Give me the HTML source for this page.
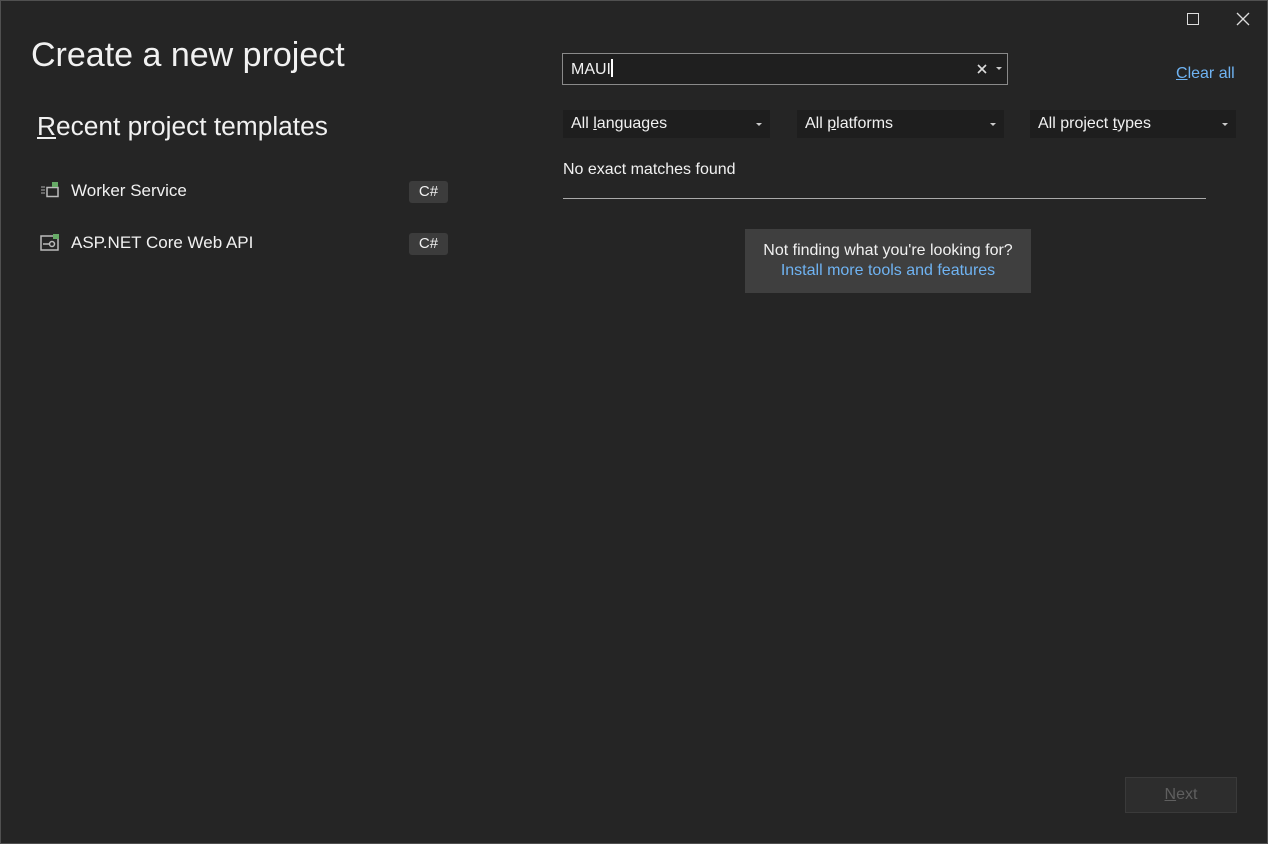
<!DOCTYPE html>
<html><head><meta charset="utf-8"><style>
*{margin:0;padding:0;box-sizing:border-box}
html,body{width:1268px;height:844px;overflow:hidden;background:#252525}
body{font-family:"Liberation Sans",sans-serif;color:#f1f1f1;position:relative}
.bd{position:absolute;left:0;top:0;width:1268px;height:844px;border:1px solid #505050}
.a{position:absolute;white-space:nowrap}
.dd{position:absolute;top:110px;height:28px;background:#1e1e1e;font-size:16px;padding:5px 8px;color:#f1f1f1}
.dd:after{content:"";position:absolute;right:8px;top:13px;border-left:3px solid transparent;border-right:3px solid transparent;border-top:3px solid #ccc}
.cs{position:absolute;left:409px;width:39px;height:22px;background:#3c3c3c;border-radius:3px;font-size:15px;text-align:center;line-height:22px}
u{text-decoration:underline}
</style></head><body>
<div class="bd"></div>
<div class="a" style="left:1187px;top:13px;width:12px;height:12px;border:1.5px solid #ddd"></div>
<svg class="a" style="left:1236px;top:12px" width="14" height="14"><path d="M1 1L13 13M13 1L1 13" stroke="#ddd" stroke-width="1.3"/></svg>
<div class="a" style="left:31px;top:36px;font-size:34px">Create a new project</div>
<div class="a" style="left:37px;top:111px;font-size:26.3px"><u>R</u>ecent project templates</div>
<svg class="a" style="left:40px;top:181px" width="20" height="18"><path d="M1 6h4M1 9h4M1 12h4" stroke="#aaa"/><rect x="7" y="6.5" width="11" height="9" fill="none" stroke="#bbb" stroke-width="1.5"/><rect x="12" y="1" width="6" height="5" fill="#6a6"/></svg>
<div class="a" style="left:71px;top:181px;font-size:17px">Worker Service</div>
<div class="cs" style="top:181px">C#</div>
<svg class="a" style="left:40px;top:233px" width="20" height="18"><rect x="1" y="3" width="17" height="14" fill="none" stroke="#bbb" stroke-width="1.5"/><path d="M3 11h6" stroke="#bbb" stroke-width="1.5"/><circle cx="12" cy="11" r="2.5" fill="none" stroke="#bbb" stroke-width="1.5"/><rect x="13" y="1" width="6" height="5" fill="#6a6"/></svg>
<div class="a" style="left:71px;top:233px;font-size:17px">ASP.NET Core Web API</div>
<div class="cs" style="top:233px">C#</div>
<div class="a" style="left:562px;top:53px;width:446px;height:32px;border:1px solid #8a8a8a;background:#1f1f1f"></div>
<div class="a" style="left:571px;top:59px;font-size:16px">MAUI<span style="display:inline-block;width:1.5px;height:18px;background:#fff;vertical-align:-3px"></span></div>
<svg class="a" style="left:977px;top:64px" width="10" height="10"><path d="M1 1L9 9M9 1L1 9" stroke="#ddd" stroke-width="1.6"/></svg>
<div class="a" style="left:996px;top:67px;border-left:3px solid transparent;border-right:3px solid transparent;border-top:3px solid #ccc"></div>
<div class="a" style="left:1176px;top:65px;font-size:16px;color:#6fb3f2"><u>C</u>lear all</div>
<div class="dd" style="left:563px;width:207px">All <u>l</u>anguages</div>
<div class="dd" style="left:797px;width:207px">All <u>p</u>latforms</div>
<div class="dd" style="left:1030px;width:206px">All project <u>t</u>ypes</div>
<div class="a" style="left:563px;top:161px;font-size:16px">No exact matches found</div>
<div class="a" style="left:563px;top:198px;width:643px;height:1px;background:#aaa"></div>
<div class="a" style="left:745px;top:229px;width:286px;height:64px;background:#3f3f3f;text-align:center;font-size:16px;padding-top:12px;line-height:20px">Not finding what you're looking for?<br><span style="color:#6fb3f2">Install more tools and features</span></div>
<div class="a" style="left:1125px;top:777px;width:112px;height:36px;background:#2d2d2d;border:1px solid #3a3a3a;color:#5f5f5f;font-size:16px;text-align:center;line-height:34px"><u>N</u>ext</div>
</body></html>
